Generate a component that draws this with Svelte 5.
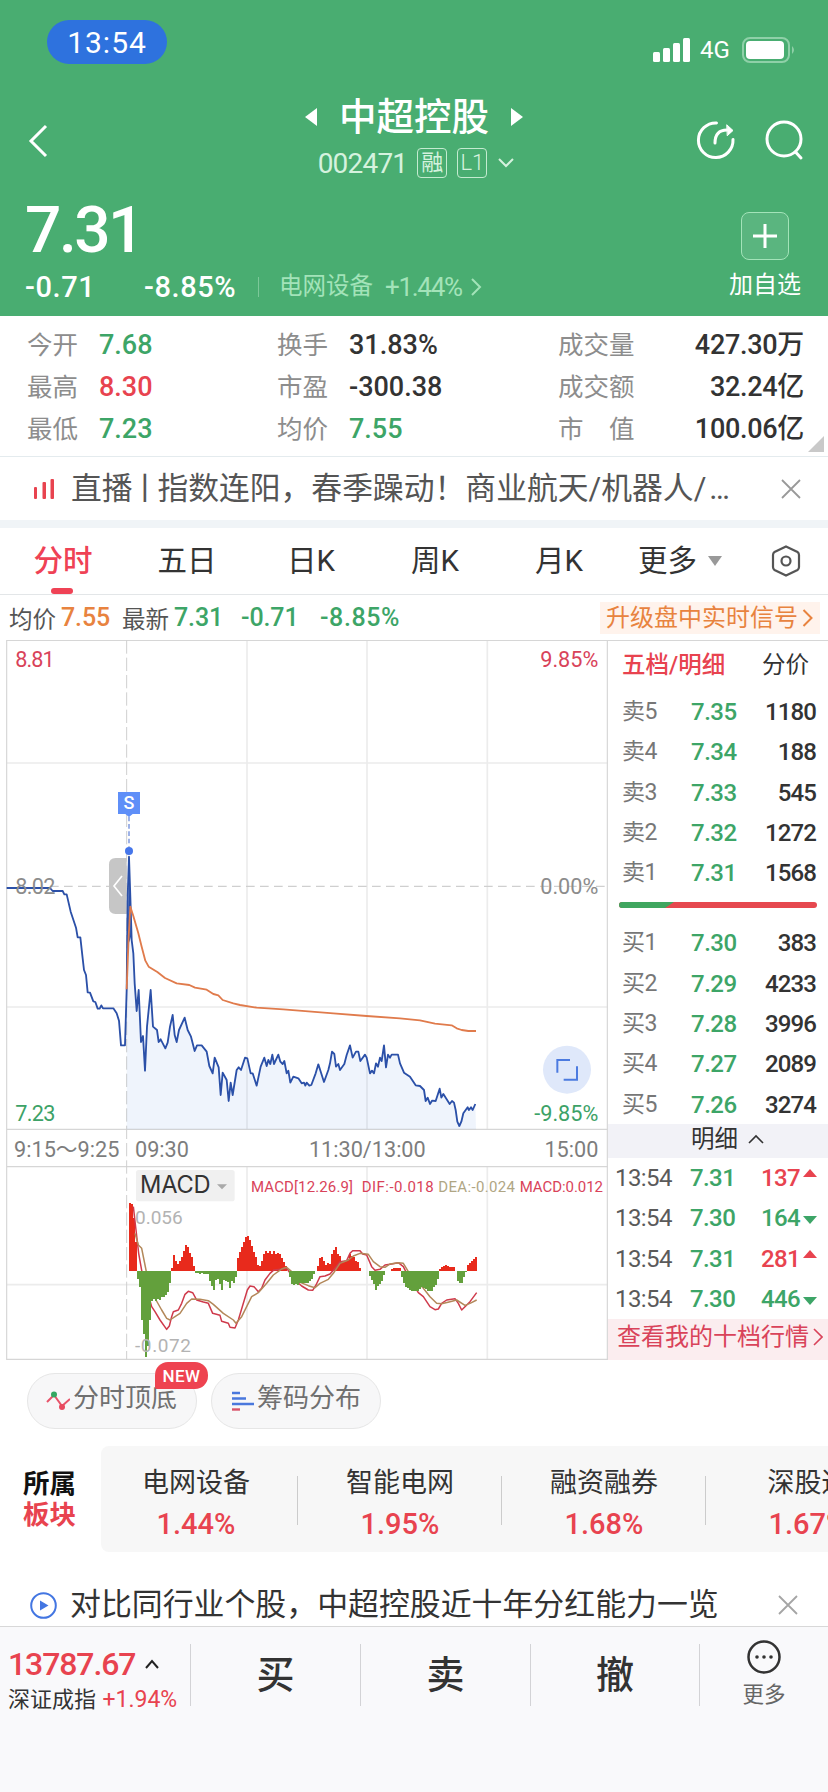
<script>
    const stats = [
        ["今开", "7.68", "down", "换手", "31.83%", "", "成交量", "427.30万"],
        ["最高", "8.30", "up", "市盈", "-300.38", "", "成交额", "32.24亿"],
        ["最低", "7.23", "down", "均价", "7.55", "down", "市　值", "100.06亿"],
    ];

    const tabs = ["分时", "五日", "日K", "周K", "月K"];
    let activeTab = "分时";

    const sells = [
        ["卖5", "7.35", 1180],
        ["卖4", "7.34", 188],
        ["卖3", "7.33", 545],
        ["卖2", "7.32", 1272],
        ["卖1", "7.31", 1568],
    ];
    const buys = [
        ["买1", "7.30", 383],
        ["买2", "7.29", 4233],
        ["买3", "7.28", 3996],
        ["买4", "7.27", 2089],
        ["买5", "7.26", 3274],
    ];
    const trades = [
        ["13:54", "7.31", 137, "up"],
        ["13:54", "7.30", 164, "down"],
        ["13:54", "7.31", 281, "up"],
        ["13:54", "7.30", 446, "down"],
    ];

    const sectors = [
        ["电网设备", "1.44%"],
        ["智能电网", "1.95%"],
        ["融资融券", "1.68%"],
        ["深股通", "1.67%"],
    ];

    // chart coordinates are in 1/3 px
    const auction =
        "20,774 150,774 158,783 188,783 193,793 200,793 212,845 228,893 233,922 241,922 248,985 252,1020 258,1035 263,1087 270,1088 280,1114 286,1116 293,1136 299,1136 304,1126 309,1135 340,1135 350,1150 357,1172 363,1246 375,1246 380,1080";
    const price =
        "380,1080 383,800 387,680 391,800 395,930 400,970 404,1060 410,1143 416,1080 423,1236 429,1218 435,1322 441,1190 452,1080 459,1190 471,1200 476,1236 482,1228 496,1255 503,1238 510,1190 518,1155 524,1215 530,1236 537,1200 554,1163 563,1200 573,1220 584,1263 591,1246 605,1246 620,1265 628,1308 638,1330 644,1283 656,1312 662,1395 668,1328 680,1350 686,1413 692,1358 698,1395 710,1320 716,1312 723,1320 735,1283 742,1285 752,1330 758,1330 770,1367 782,1310 793,1283 800,1308 805,1290 811,1302 817,1274 822,1302 835,1274 841,1295 848,1302 853,1293 860,1330 865,1322 871,1358 880,1340 895,1345 905,1360 912,1358 916,1367 920,1358 928,1367 934,1365 947,1330 955,1303 972,1356 985,1320 990,1300 996,1265 1003,1272 1008,1310 1015,1302 1020,1320 1033,1302 1040,1275 1050,1246 1058,1283 1068,1265 1075,1265 1081,1293 1095,1274 1100,1283 1110,1330 1116,1322 1122,1330 1128,1300 1134,1310 1140,1283 1145,1293 1152,1246 1158,1312 1164,1274 1170,1283 1175,1274 1194,1274 1200,1300 1212,1328 1230,1340 1247,1366 1260,1368 1272,1380 1277,1413 1283,1403 1290,1422 1296,1412 1307,1413 1319,1376 1324,1403 1330,1392 1349,1422 1356,1413 1362,1418 1367,1440 1372,1475 1378,1488 1384,1475 1390,1450 1403,1432 1407,1440 1413,1432 1418,1440 1426,1422";
    const average =
        "380,1078 386,920 391,830 400,858 415,910 425,950 436,992 446,1010 472,1026 495,1044 530,1060 568,1065 585,1073 620,1079 640,1092 655,1096 668,1110 700,1120 720,1125 770,1133 850,1138 1000,1150 1100,1158 1200,1165 1260,1171 1305,1181 1355,1186 1370,1195 1385,1200 1405,1203 1428,1203";

    const bars = [
        203, 200, 158, 85, -24, -50, -149, -190, -259, -225, -147, -90, -85, -90,
        -85, -88, -80, -80, -72, -65, -38, 8, 48, 28, 20, 28, 42, 60, 78, 72, 52,
        40, 15, -6, -8, -10, -8, -10, -10, -10, -30, -45, -58, -28, -25, -40, -58,
        -28, -30, -35, -52, -32, -38, -18, 38, 55, 72, 85, 100, 104, 92, 75, 55,
        42, 16, 14, 30, 50, 60, 52, 58, 50, 60, 50, 52, 50, 38, 25, 15, 0, -20,
        -40, -44, -40, -42, -38, -38, -36, -36, -36, -32, -25, -10, 0, 15, 38, 42,
        28, 16, 22, 20, 50, 62, 72, 50, 45, 30, 25, 28, 35, 50, 45, 40, 28, 25, 8,
        0, 0, 0, 0, -15, -28, -40, -58, -45, -40, -30, -12, 0, -2, 0, 6, 8, 9, 9,
        8, -18, -38, -48, -52, -58, -62, -62, -60, -62, -55, -50, -52, -55, -60,
        -62, -60, -50, -42, -25, 5, 10, 14, 18, 14, 12, 12, 10, 0, -30, -38, -36,
        -20, -5, 18, 22, 28, 35, 42,
    ];
    const columns = bars.map((v, i) => ({ x: 387 + i * 6, v }));
    const rises = columns.filter((c) => c.v > 0);
    const falls = columns.filter((c) => c.v < 0);

    const dif =
        "400,260 408,330 416,400 425,451 455,560 465,575 480,600 500,628 508,618 515,590 520,575 535,570 545,550 555,523 565,514 578,518 590,540 610,546 625,550 638,580 660,586 665,604 685,610 690,622 705,624 715,600 730,550 742,510 750,498 762,500 775,515 785,505 795,480 810,460 820,451 860,445 885,480 905,498 925,510 938,511 948,495 960,470 975,468 990,462 1005,445 1020,425 1040,422 1050,400 1058,392 1080,392 1088,402 1100,405 1115,440 1125,451 1140,448 1155,435 1175,432 1195,428 1210,440 1220,460 1255,518 1270,530 1290,560 1305,569 1315,567 1325,550 1340,540 1365,536 1375,550 1385,570 1395,560 1410,545 1430,518";
    const dea =
        "405,340 415,375 425,385 432,420 440,460 455,510 468,540 485,570 500,595 510,600 525,590 540,580 560,550 575,537 600,538 625,542 640,553 670,580 700,600 708,610 725,590 740,560 755,530 775,518 800,490 820,465 845,447 860,442 875,455 895,485 925,497 945,503 960,490 985,478 1000,460 1020,430 1045,420 1060,408 1080,400 1105,403 1120,425 1140,440 1155,442 1170,432 1195,428 1210,430 1225,455 1270,505 1290,530 1310,550 1325,551 1350,545 1370,540 1395,556 1410,550 1430,540";
</script>

<div class="page">
    <header>
        <div class="status">
            <span class="clock">13:54</span>
            <div class="signal">
                <svg width="38" height="24" viewBox="0 0 38 24" fill="#fff">
                    <rect x="0" y="14" width="7" height="10" rx="1.5" />
                    <rect x="10" y="10" width="7" height="14" rx="1.5" />
                    <rect x="20" y="5" width="7" height="19" rx="1.5" />
                    <rect x="30" y="0" width="7" height="24" rx="1.5" />
                </svg>
                <span class="net">4G</span>
                <svg width="54" height="26" viewBox="0 0 54 26">
                    <rect x="1" y="1" width="46" height="24" rx="7" fill="none" stroke="#8fd0a8" stroke-width="2" />
                    <rect x="4" y="4" width="38" height="18" rx="4" fill="#fff" />
                    <path d="M50 9q4 4 0 8z" fill="#8fd0a8" />
                </svg>
            </div>
        </div>

        <div class="nav">
            <svg class="back" width="22" height="36" viewBox="0 0 22 36">
                <path d="M19 3L4 18l15 15" fill="none" stroke="#fff" stroke-width="3" />
            </svg>
            <div class="heading">
                <div class="title">
                    <svg width="14" height="18" viewBox="0 0 14 18"><path d="M13 0v18L1 9z" fill="#fff" /></svg>
                    <h1>中超控股</h1>
                    <svg width="14" height="18" viewBox="0 0 14 18"><path d="M1 0v18l12-9z" fill="#fff" /></svg>
                </div>
                <div class="code">
                    <span class="code-num">002471</span>
                    <span class="tag">融</span>
                    <span class="tag thin">L1</span>
                    <svg width="18" height="12" viewBox="0 0 18 12">
                        <path d="M2 2l7 7 7-7" fill="none" stroke="#d5f2de" stroke-width="2" />
                    </svg>
                </div>
            </div>
            <div class="actions">
                <svg width="40" height="42" viewBox="0 0 40 42" fill="none" stroke="#fff" stroke-width="3" stroke-linecap="round">
                    <path d="M20.500 4A17.300 17.300 0 1 0 37 20.500" />
                    <path d="M19 24c0-8 3-13 12-13" />
                    <path d="M31 6l6 5.500-5.500 5z" fill="#fff" stroke-width="1" stroke-linejoin="round" />
                </svg>
                <svg width="40" height="42" viewBox="0 0 40 42" fill="none" stroke="#fff" stroke-width="3">
                    <circle cx="20" cy="20" r="17" />
                    <path d="M31.500 33l5.500 6" stroke-linecap="round" />
                </svg>
            </div>
        </div>

        <div class="quote">
            <div>
                <div class="last">7.31</div>
                <div class="change">
                    <span class="diff">-0.71</span>
                    <span class="pct">-8.85%</span>
                    <i></i>
                    <span class="sector">电网设备</span>
                    <span class="sector-pct">+1.44%</span>
                    <svg width="12" height="20" viewBox="0 0 12 20">
                        <path d="M2 2l8 8-8 8" fill="none" stroke="#a3e3b9" stroke-width="2" />
                    </svg>
                </div>
            </div>
            <div class="watch">
                <span class="plus">
                    <svg width="26" height="26" viewBox="0 0 26 26"><path d="M13 1v24M1 13h24" stroke="#fff" stroke-width="3" /></svg>
                </span>
                <span>加自选</span>
            </div>
        </div>
    </header>

    <section class="stats">
        {#each stats as s}
            <div class="stat-row">
                <span class="label">{s[0]}</span>
                <b class={s[2]}>{s[1]}</b>
                <span class="label">{s[3]}</span>
                <b class={s[5]}>{s[4]}</b>
                <span class="label">{s[6]}</span>
                <b class="right">{s[7]}</b>
            </div>
        {/each}
        <svg class="fold" width="16" height="16" viewBox="0 0 16 16"><path d="M16 0v16H0z" fill="#c9c9c9" /></svg>
    </section>

    <section class="notice">
        <svg width="20" height="20" viewBox="0 0 20 20" fill="#e8434f">
            <rect x="0" y="8" width="3" height="12" rx="1" />
            <rect x="8.5" y="3" width="3.5" height="17" rx="1" />
            <rect x="16.5" y="0" width="3.5" height="20" rx="1" />
        </svg>
        <span class="notice-text">直播<i>丨</i>指数连阳，春季躁动！商业航天/机器人/<u>…</u></span>
        <svg width="20" height="20" viewBox="0 0 20 20"><path d="M1 1l18 18M19 1L1 19" stroke="#999" stroke-width="1.8" /></svg>
    </section>

    <nav class="tabs">
        {#each tabs as tab}
            <button class:active={tab === activeTab} on:click={() => (activeTab = tab)}>{tab}</button>
        {/each}
        <button class="more">
            更多
            <svg width="14" height="10" viewBox="0 0 14 10"><path d="M0 0h14L7 10z" fill="#999" /></svg>
        </button>
        <svg class="setting" width="32" height="32" viewBox="0 0 32 32" fill="none" stroke="#555" stroke-width="2.2">
            <path d="M16 1.5l11.5 5.5q1.5 1 1.5 3v12q0 2-1.5 3L16 30.5 4.5 25Q3 24 3 22V10q0-2 1.5-3z" />
            <circle cx="16" cy="16" r="4.5" />
        </svg>
    </nav>

    <div class="legend">
        <span>均价</span><b class="avg">7.55</b>
        <span>最新</span><b class="down new">7.31</b>
        <b class="down d">-0.71</b>
        <b class="down p">-8.85%</b>
        <a class="upsell" href="#signal">
            升级盘中实时信号
            <svg width="12" height="20" viewBox="0 0 12 20"><path d="M1.5 2l8 8-8 8" fill="none" stroke="#e8833f" stroke-width="2" /></svg>
        </a>
    </div>

    <div class="board">
        <svg class="chart" width="608" height="720" viewBox="0 30 1824 2160">
            <g class="grid">
                <path d="M20 399H1824M20 1131H1824M741 31V1498M1101 31V1498M1462 31V1498" />
                <path d="M741 1610V2188M1101 1610V2188M1462 1610V2188M20 1964H1824" />
            </g>
            <path class="frame" d="M1824 31H20V2188H1824M20 1498H1824M20 1610H1824M1822 31V2188" />
            <path class="dash" d="M380 31V2188" stroke-dasharray="40 12" />
            <path class="dash mid" d="M150 769H1815" stroke-dasharray="26 16" />

            <polygon points="380,1498 {price} 1428,1498" fill="#2f6fd6" fill-opacity=".08" />
            <path d="M380 684V852H347q-20 0-20-20V704q0-20 20-20z" fill="#c6c6c6" />
            <path d="M366 738l-24 30 24 30" fill="none" stroke="#fff" stroke-width="5" />
            <polyline class="price" points={auction} />
            <polyline class="price" points={price} />
            <path d="M383 950L387 680l6 240z" fill="#2b50a8" />
            <polyline class="average" points={average} />

            <path d="M387 560v90" stroke="#6f8ddc" stroke-width="4" stroke-dasharray="14 8" />
            <circle cx="387" cy="663" r="12" fill="#4676ea" />
            <path d="M354 486h66v66h-22l-11 9-11-9h-22z" fill="#5f8ff8" />
            <text class="mark" x="387" y="538" text-anchor="middle">S</text>

            <g class="scale">
                <text x="46" y="110" textLength="118" fill="#d9435a">8.81</text>
                <text x="46" y="791" textLength="120" fill="#8c8c8c">8.02</text>
                <text x="46" y="1472" textLength="120" fill="#3da267">7.23</text>
                <text x="1795" y="110" text-anchor="end" fill="#d9435a">9.85%</text>
                <text x="1795" y="791" text-anchor="end" fill="#8c8c8c">0.00%</text>
                <text x="1795" y="1472" text-anchor="end" fill="#3da267">-9.85%</text>
                <g fill="#7d7d7d">
                    <text x="42" y="1580" textLength="316">9:15～9:25</text>
                    <text x="405" y="1580">09:30</text>
                    <text x="1102" y="1580" text-anchor="middle">11:30/13:00</text>
                    <text x="1795" y="1580" text-anchor="end">15:00</text>
                </g>
            </g>

            <circle cx="1701" cy="1319" r="72" fill="#dfe8fa" />
            <path d="M1672 1328v-38h38M1691 1349h40v-40" fill="none" stroke="#4c7be0" stroke-width="6" />

            <!-- MACD -->
            <g transform="translate(0 1470)">
                <g class="bars">
                    {#each rises as c}
                        <rect x={c.x} y={452 - c.v} width="6" height={c.v} fill="#e82a1c" />
                    {/each}
                </g>
                <polyline class="dif" points={dif} />
                <polyline class="dea" points={dea} />
                <g class="bars">
                    {#each falls as c}
                        <rect x={c.x} y="452" width="6" height={-c.v} fill="#63a03c" />
                    {/each}
                </g>
                <rect x="408" y="150" width="296" height="94" rx="8" fill="#f0f0f0" />
                <text class="macd-name" x="420" y="219" textLength="212">MACD</text>
                <path d="M651 193h30l-15 15z" fill="#a9a9a9" />
                <g class="macd-text">
                    <text x="753" y="216" fill="#d9435a" textLength="306">MACD[12.26.9]</text>
                    <text x="1085" y="216" fill="#d9435a" textLength="216">DIF:-0.018</text>
                    <text x="1315" y="216" fill="#b0a684" textLength="230">DEA:-0.024</text>
                    <text x="1559" y="216" fill="#d9435a" textLength="250">MACD:0.012</text>
                </g>
                <g class="macd-range">
                    <text x="405" y="311">0.056</text>
                    <text x="405" y="695" textLength="168">-0.072</text>
                </g>
            </g>
        </svg>

        <aside>
            <div class="book-head"><b>五档/明细</b><span>分价</span></div>
            {#each sells as [name, p, qty]}
                <div class="level"><span>{name}</span><b class="down">{p}</b><b class="qty">{qty}</b></div>
            {/each}
            <div class="ratio">
                <svg width="198" height="6" viewBox="0 0 198 6">
                    <rect width="198" height="6" rx="3" fill="#e6484f" />
                    <path d="M3 0H55L46 6H3A3 3 0 0 1 3 0z" fill="#3fa65f" />
                </svg>
            </div>
            {#each buys as [name, p, qty]}
                <div class="level"><span>{name}</span><b class="down">{p}</b><b class="qty">{qty}</b></div>
            {/each}
            <div class="detail">
                明细
                <svg width="16" height="10" viewBox="0 0 16 10"><path d="M1 9l7-7 7 7" fill="none" stroke="#333" stroke-width="1.6" /></svg>
            </div>
            {#each trades as [time, p, qty, dir]}
                <div class="trade">
                    <span>{time}</span>
                    <b class="down">{p}</b>
                    <b class="vol {dir}">{qty}</b>
                    <svg width="14" height="18" viewBox="0 0 14 18">
                        {#if dir === "up"}
                            <path d="M7 0l7 8H0z" fill="#e8434f" />
                        {:else}
                            <path d="M0 7h14l-7 8z" fill="#3da567" />
                        {/if}
                    </svg>
                </div>
            {/each}
            <div class="ten">
                查看我的十档行情
                <svg width="10" height="18" viewBox="0 0 10 18"><path d="M1 1l8 8-8 8" fill="none" stroke="#d9435a" stroke-width="1.6" /></svg>
            </div>
        </aside>
    </div>

    <div class="tools">
        <div class="tool">
            <svg width="24" height="20" viewBox="0 0 24 20">
                <path d="M1 11l7-7 8 11 8-7" fill="none" stroke="#e8536a" stroke-width="2" />
                <circle cx="8" cy="3.5" r="3" fill="#34a862" />
                <circle cx="16" cy="16" r="3" fill="#e84a5f" />
            </svg>
            <span>分时顶底</span>
            <em>NEW</em>
        </div>
        <div class="tool second">
            <svg width="22" height="20" viewBox="0 0 22 20" stroke-width="2.4">
                <path d="M0 2h8M0 7.5h14M0 13h22" stroke="#4a78dd" />
                <path d="M0 18.5h8" stroke="#d9536a" />
            </svg>
            <span>筹码分布</span>
        </div>
    </div>

    <div class="sectors">
        <div class="sectors-name">所属<br /><span>板块</span></div>
        <div class="sectors-list">
            {#each sectors as [name, pct]}
                <div class="sector-item"><span>{name}</span><b>{pct}</b></div>
            {/each}
        </div>
    </div>

    <div class="video">
        <svg width="27" height="27" viewBox="0 0 27 27">
            <circle cx="13.5" cy="13.5" r="12.3" fill="none" stroke="#4376e2" stroke-width="2" />
            <path d="M10 8.5v10l8.5-5z" fill="#4376e2" />
        </svg>
        <span class="video-text">对比同行业个股，中超控股近十年分红能力一览</span>
        <svg width="20" height="20" viewBox="0 0 20 20"><path d="M1 1l18 18M19 1L1 19" stroke="#a5a5a5" stroke-width="1.8" /></svg>
    </div>

    <footer>
        <div class="index">
            <div class="index-top">
                13787.67
                <svg width="16" height="10" viewBox="0 0 16 10"><path d="M2 9l6-7 6 7" fill="none" stroke="#222" stroke-width="2" /></svg>
            </div>
            <div class="index-sub">深证成指 <b>+1.94%</b></div>
        </div>
        <div class="trade-btn">买</div>
        <div class="trade-btn">卖</div>
        <div class="trade-btn">撤</div>
        <div class="footer-more">
            <svg width="36" height="36" viewBox="0 0 36 36">
                <circle cx="18" cy="18" r="15.5" fill="none" stroke="#333" stroke-width="2.5" />
                <g fill="#333"><circle cx="11" cy="18" r="1.8" /><circle cx="18" cy="18" r="1.8" /><circle cx="25" cy="18" r="1.8" /></g>
            </svg>
            更多
        </div>
    </footer>
</div>

<style>
    :global(body) {
        background: #fff;
    }

    .page {
        width: 828px;
        height: 1792px;
        overflow: hidden;
        font-family: Roboto, "Noto Sans CJK SC", sans-serif;
        color: #333;
    }

    .page,
    .page * {
        box-sizing: border-box;
    }

    svg {
        display: block;
        flex: none;
    }

    b {
        font-weight: 500;
    }

    .up {
        color: #e8434f;
    }

    .down {
        color: #3da567;
    }

    header {
        height: 316px;
        background: #49ad71;
        color: #fff;
    }

    .status {
        display: flex;
        justify-content: space-between;
        height: 84px;
        padding: 20px 32px 0 47px;
    }

    .clock {
        width: 120px;
        height: 44px;
        border-radius: 22px;
        background: #2e72de;
        font-size: 30px;
        letter-spacing: 1px;
        line-height: 45px;
        text-align: center;
    }

    .signal {
        display: flex;
        align-items: center;
        height: 60px;
    }

    .net {
        width: 42px;
        margin-left: 9px;
        font-size: 24px;
    }

    .nav {
        display: grid;
        grid-template-columns: 140px 1fr 140px;
        align-items: center;
        height: 112px;
    }

    .back {
        margin: 2px 0 0 27px;
    }

    .title,
    .code {
        display: flex;
        align-items: center;
        justify-content: center;
        height: 46px;
    }

    h1 {
        margin: 0 21px;
        font-size: 37.5px;
        font-weight: 500;
        line-height: 46px;
    }

    .code {
        padding-left: 5px;
        color: #d5f2de;
    }

    .code-num {
        font-size: 28px;
        letter-spacing: -0.8px;
    }

    .tag {
        width: 30px;
        height: 30px;
        margin-left: 10px;
        border: 1.5px solid #c4ebd0;
        border-radius: 4px;
        font-size: 22px;
        line-height: 27px;
        text-align: center;
    }

    .thin {
        font-weight: 300;
    }

    .code svg {
        margin-left: 10px;
    }

    .actions {
        display: flex;
        gap: 28px;
        margin-left: 8px;
    }

    .quote {
        display: flex;
        justify-content: space-between;
        height: 120px;
        padding: 0 27px 0 25px;
    }

    .last {
        height: 64px;
        font-size: 64px;
        font-weight: 500;
        letter-spacing: -2.5px;
        line-height: 69px;
    }

    .change {
        display: flex;
        align-items: center;
        height: 54px;
        font-size: 29px;
        font-weight: 500;
        letter-spacing: 0.6px;
    }

    .diff {
        width: 119px;
    }

    .pct {
        width: 114px;
    }

    .change i {
        width: 1px;
        height: 20px;
        margin-right: 20px;
        background: #7cc899;
    }

    .sector,
    .sector-pct {
        color: #a3e3b9;
        font-size: 23.5px;
        font-weight: 400;
        letter-spacing: 0;
        line-height: 30px;
        padding-bottom: 3px;
    }

    .sector-pct {
        margin: 0 8px 0 12px;
        padding-bottom: 0;
        font-size: 26px;
        letter-spacing: -1.3px;
    }

    .watch {
        display: flex;
        flex-direction: column;
        align-items: center;
        padding-top: 16px;
        font-size: 24px;
        line-height: 50px;
    }

    .plus {
        display: flex;
        align-items: center;
        justify-content: center;
        width: 48px;
        height: 48px;
        border: 1.5px solid #a3e3b9;
        border-radius: 8px;
        background: #5ab57f;
    }

    .stats {
        position: relative;
        height: 141px;
        padding: 8px 24px 0 27px;
        border-bottom: 1px solid #e4ebee;
    }

    .stat-row {
        display: grid;
        grid-template-columns: 72px 178px 72px 209px 90px 1fr;
        height: 42px;
        font-size: 27px;
        line-height: 42px;
    }

    .label {
        color: #8d8d8d;
        font-size: 25.5px;
    }

    .right {
        letter-spacing: -0.3px;
        text-align: right;
    }

    .fold {
        position: absolute;
        right: 4px;
        bottom: 4px;
    }

    .notice {
        display: flex;
        align-items: center;
        height: 71px;
        padding: 0 27px 0 34px;
        border-bottom: 8px solid #f0f4f7;
        color: #555;
    }

    .notice-text {
        flex: 1;
        margin-left: 17px;
        font-size: 30.8px;
        line-height: 44px;
        white-space: nowrap;
    }

    .notice-text i {
        margin: 0 -3px;
        font-style: normal;
    }

    .notice-text u {
        margin-left: 3px;
        letter-spacing: 1px;
        text-decoration: none;
    }

    .tabs {
        display: flex;
        align-items: center;
        height: 67px;
        padding-left: 1px;
        border-bottom: 1px solid #e3e6e8;
    }

    .tabs button {
        position: relative;
        width: 124px;
        height: 66px;
        padding: 0;
        border: none;
        background: none;
        color: #333;
        font-family: inherit;
        font-size: 29.5px;
        line-height: 66px;
    }

    .tabs .active {
        color: #ef4255;
        font-weight: 500;
    }

    .active::after {
        content: "";
        position: absolute;
        left: 50px;
        bottom: 0;
        width: 22px;
        height: 6px;
        border-radius: 3px;
        background: #ef4255;
    }

    .tabs .more {
        display: flex;
        align-items: center;
        gap: 11px;
        width: 133px;
        padding-left: 17px;
    }

    .setting {
        margin-left: 16px;
    }

    .legend {
        display: flex;
        align-items: center;
        height: 45px;
        padding: 0 8px 0 9px;
        color: #555;
        font-size: 23.5px;
    }

    .legend b {
        font-size: 25px;
        letter-spacing: -0.1px;
    }

    .legend .avg {
        width: 66px;
        padding-left: 5px;
        color: #e8833f;
    }

    .legend .new {
        width: 72px;
        padding-left: 5px;
    }

    .legend .d {
        width: 79px;
    }

    .legend .p {
        letter-spacing: 0.6px;
    }

    .upsell {
        display: flex;
        align-items: center;
        gap: 4px;
        height: 32px;
        margin-left: auto;
        padding: 0 6px;
        background: #fff3ec;
        color: #e8833f;
        font-size: 24px;
        line-height: 30px;
        text-decoration: none;
        white-space: nowrap;
    }

    .board {
        display: flex;
        height: 720px;
    }

    .grid path {
        fill: none;
        stroke: #ececec;
        stroke-width: 5;
    }

    .frame {
        fill: none;
        stroke: #d6d6d6;
        stroke-width: 3.5;
    }

    .dash {
        fill: none;
        stroke: #cfcfcf;
        stroke-width: 3;
    }

    .mid {
        stroke-width: 4;
    }

    .price,
    .average,
    .dif,
    .dea {
        fill: none;
        stroke: #2b50a8;
        stroke-width: 5.5;
        stroke-linejoin: round;
    }

    .average {
        stroke: #e07b4c;
    }

    .dif {
        stroke: #cf3a4b;
        stroke-width: 4.5;
    }

    .dea {
        stroke: #b3885a;
        stroke-width: 4.5;
    }

    .bars {
        shape-rendering: crispEdges;
    }

    .mark {
        fill: #fff;
        font-size: 54px;
        font-weight: 500;
    }

    .scale {
        font-size: 65px;
    }

    .macd-name {
        fill: #333;
        font-family: Inter, sans-serif;
        font-size: 71px;
    }

    .macd-text {
        font-size: 45px;
    }

    .macd-range {
        fill: #b3b3b3;
        font-size: 57px;
    }

    aside {
        width: 220px;
        border-top: 1px solid #d6d6d6;
        font-size: 24px;
    }

    .book-head {
        display: flex;
        justify-content: space-between;
        height: 50px;
        padding: 0 19px 0 14px;
        font-size: 23.5px;
        line-height: 49px;
    }

    .book-head b {
        color: #e8434f;
    }

    .level {
        display: grid;
        grid-template-columns: 69px 60px 1fr;
        height: 40.3px;
        padding: 0 12px 0 14px;
        line-height: 42px;
        letter-spacing: -0.5px;
    }

    .level span {
        color: #777;
        font-size: 23px;
    }

    .qty {
        color: #333;
        letter-spacing: -0.9px;
        text-align: right;
    }

    .ratio {
        display: flex;
        height: 30px;
        padding: 10px 0 0 11px;
    }

    .detail {
        display: flex;
        align-items: center;
        gap: 10px;
        height: 34px;
        padding: 0 0 3px 83px;
        background: #f2f2f7;
        font-size: 23.5px;
        line-height: 30px;
    }

    .trade {
        display: grid;
        grid-template-columns: 75px 50px 60px 14px;
        align-items: center;
        height: 40.3px;
        padding-left: 7px;
        letter-spacing: -0.6px;
    }

    .trade span {
        color: #5a5a5a;
    }

    .vol {
        text-align: right;
    }

    .trade svg {
        margin-left: 3px;
    }

    .ten {
        display: flex;
        align-items: center;
        gap: 4px;
        height: 41px;
        padding: 0 0 5px 9px;
        background: #fbedef;
        color: #d9435a;
        line-height: 34px;
        white-space: nowrap;
    }

    .tools {
        display: flex;
        gap: 14px;
        height: 86px;
        padding: 13px 27px;
    }

    .tool {
        position: relative;
        display: flex;
        align-items: center;
        width: 170px;
        height: 56px;
        padding-left: 18px;
        border: 1px solid #e6e6e6;
        border-radius: 28px;
        background: #f7f7f8;
        color: #707070;
        font-size: 26px;
        gap: 3px;
    }

    .tool span {
        padding-bottom: 6px;
        line-height: 36px;
    }

    .second {
        padding-left: 20px;
    }

    .tool em {
        position: absolute;
        left: 127px;
        top: -12px;
        width: 53px;
        height: 27px;
        border-radius: 13px 13px 13px 2px;
        background: #ee4350;
        color: #fff;
        font-size: 17px;
        font-style: normal;
        font-weight: 500;
        letter-spacing: 0.5px;
        line-height: 29px;
        text-align: center;
    }

    .sectors {
        display: flex;
        height: 106px;
    }

    .sectors-name {
        width: 101px;
        flex: none;
        padding: 22px 0 0 23px;
        color: #111;
        font-size: 26.5px;
        font-weight: 700;
        line-height: 31px;
    }

    .sectors-name span {
        color: #e8434f;
    }

    .sectors-list {
        display: flex;
        width: 727px;
        overflow: hidden;
        border-radius: 8px 0 0 8px;
        background: #f7f7f7;
    }

    .sector-item {
        position: relative;
        display: flex;
        flex: none;
        flex-direction: column;
        align-items: center;
        width: 204px;
        padding-top: 17px;
        font-size: 27px;
        line-height: 41px;
    }

    .sector-item:first-child {
        width: 197px;
        padding-right: 7px;
    }

    .sector-item b {
        color: #e8434f;
        font-size: 29px;
        line-height: 40px;
    }

    .sector-item:not(:last-child)::after {
        content: "";
        position: absolute;
        right: 0;
        top: 30px;
        width: 1px;
        height: 49px;
        background: #ccc;
    }

    .video {
        display: flex;
        align-items: center;
        height: 74px;
        padding: 32px 30px 0;
    }

    .video-text {
        flex: 1;
        margin-left: 13px;
        font-size: 30.9px;
        line-height: 44px;
        white-space: nowrap;
    }

    footer {
        display: flex;
        height: 167px;
        padding-top: 17px;
        border-top: 1.5px solid #d8d8d8;
        background: #f9f9fb;
    }

    .index {
        width: 190px;
        height: 62px;
        padding-left: 8px;
    }

    .index-top {
        display: flex;
        align-items: center;
        gap: 9px;
        height: 40px;
        color: #e8434f;
        font-size: 32px;
        font-weight: 500;
        letter-spacing: -1.1px;
    }

    .index-sub {
        height: 32px;
        font-size: 22px;
        line-height: 32px;
        white-space: nowrap;
    }

    .index-sub b {
        margin-left: 1px;
        color: #e8434f;
        font-weight: 400;
        font-size: 23px;
    }

    .trade-btn {
        width: 170px;
        height: 62px;
        border-left: 1px solid #d3d3d6;
        font-size: 38px;
        font-weight: 500;
        line-height: 63px;
        text-align: center;
    }

    .trade-btn:nth-last-child(2) {
        border-right: 1px solid #d3d3d6;
    }

    .footer-more {
        display: flex;
        flex-direction: column;
        align-items: center;
        width: 128px;
        height: 62px;
        margin-top: -5px;
        color: #666;
        font-size: 21.5px;
        line-height: 40px;
    }
</style>
